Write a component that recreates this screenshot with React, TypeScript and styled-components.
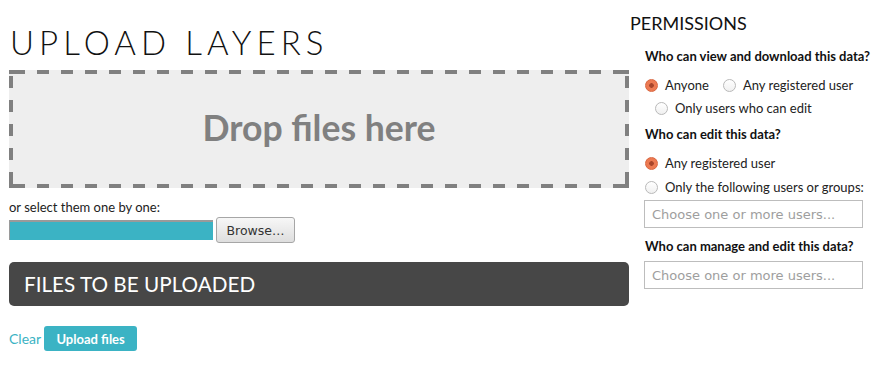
import React from 'react';
import styled, { createGlobalStyle } from 'styled-components';

const GlobalStyle = createGlobalStyle`
  body {
    margin: 0;
    background: #ffffff;
    font-family: Lato, "Open Sans", sans-serif;
    color: #333333;
  }
`;

const StyledPage = styled.div`
  display: grid;
  grid-template-columns: 620px 1fr;
  column-gap: 1px;
  padding-left: 9px;
  width: 880px;
  box-sizing: border-box;
`;

const StyledUpload = styled.section`
  padding-top: 23px;
`;

const Title = styled.h1`
  margin: 0 0 8px 1px;
  font-size: 33px;
  line-height: 39px;
  font-weight: 300;
  letter-spacing: 5.1px;
  color: #111111;
`;

// dashed frame drawn with gradients so the dash length matches (12px on, 12px off)
const dash = '#808080';
const DropZone = styled.div`
  height: 118px;
  box-sizing: border-box;
  background:
    linear-gradient(90deg, ${dash} 12px, transparent 12px) 4px 0 / 24px 4px repeat-x,
    linear-gradient(90deg, ${dash} 12px, transparent 12px) 4px 100% / 24px 4px repeat-x,
    linear-gradient(180deg, ${dash} 12px, transparent 12px) 0 6px / 4px 24px repeat-y,
    linear-gradient(180deg, ${dash} 12px, transparent 12px) 100% 6px / 4px 24px repeat-y,
    linear-gradient(${dash}, ${dash}) 0 0 / 4px 4px no-repeat,
    linear-gradient(${dash}, ${dash}) 100% 0 / 4px 4px no-repeat,
    linear-gradient(${dash}, ${dash}) 0 100% / 16px 4px no-repeat,
    linear-gradient(${dash}, ${dash}) 100% 100% / 16px 4px no-repeat,
    #eeeeee;
  display: flex;
  align-items: center;
  justify-content: center;
  font-size: 35.6px;
  font-weight: 700;
  color: #808080;
  padding-bottom: 3px;
`;

const Hint = styled.p`
  margin: 11px 0 0;
  font-size: 13px;
  line-height: 16px;
  color: #222222;
`;

const FileRow = styled.div`
  display: flex;
  align-items: center;
  gap: 3px;
  margin-top: 2px;
  height: 26px;
`;

const FileField = styled.div`
  width: 204px;
  height: 20px;
  box-sizing: border-box;
  background: #3bb3c4;
  border-top: 2px solid #9a9a9a;
  border-left: 1px solid #9a9a9a;
`;

const BrowseButton = styled.button`
  width: 79px;
  height: 26px;
  box-sizing: border-box;
  border: 1px solid #a6a6a6;
  border-radius: 3px;
  background: linear-gradient(#f7f7f7, #dedede);
  font-family: "DejaVu Sans", sans-serif;
  font-size: 12.5px;
  color: #333333;
  padding: 0;
`;

const FilesBar = styled.div`
  margin-top: 19px;
  height: 44px;
  border-radius: 5px;
  background: #474747;
  color: #ffffff;
  font-size: 20.7px;
  display: flex;
  align-items: center;
  padding: 0 0 1px 15px;
  box-sizing: border-box;
`;

const Actions = styled.div`
  display: flex;
  align-items: center;
  gap: 3px;
  margin-top: 20px;
`;

const ClearLink = styled.a`
  font-size: 14px;
  color: #3bb3c4;
  text-decoration: none;
`;

const UploadButton = styled.button`
  height: 25px;
  width: 93px;
  border: none;
  border-radius: 3px;
  background: #3bb3c4;
  color: #ffffff;
  font-family: Lato, sans-serif;
  font-weight: 700;
  font-size: 13px;
  padding: 0;
`;

const StyledPermissions = styled.aside`
  padding-top: 12px;
`;

const PermTitle = styled.h2`
  margin: 0;
  font-size: 18px;
  line-height: 22px;
  font-weight: 400;
  color: #111111;
`;

const Question = styled.h3<{ $top: number }>`
  margin: ${({ $top }) => $top}px 0 0 15px;
  font-size: 13px;
  line-height: 16px;
  font-weight: 700;
  color: #111111;
`;

const RadioRow = styled.div<{ $top: number; $indent?: number }>`
  display: flex;
  gap: 14px;
  margin: ${({ $top }) => $top}px 0 0 ${({ $indent = 15 }) => $indent}px;
  height: 16px;
`;

const RadioLabel = styled.label`
  display: flex;
  align-items: center;
  gap: 7px;
  font-size: 13px;
  line-height: 16px;
  color: #222222;
`;

const Radio = styled.span<{ $checked?: boolean }>`
  width: 13px;
  height: 13px;
  box-sizing: border-box;
  border-radius: 50%;
  border: 1px solid ${({ $checked }) => ($checked ? '#d9663f' : '#b9b9b9')};
  background: ${({ $checked }) =>
    $checked ? 'radial-gradient(circle, #a8452a 0 2px, #ec7a52 2.6px)' : 'linear-gradient(#ffffff, #f0f0f0)'};
`;

const UserInput = styled.input<{ $top: number }>`
  display: block;
  margin: ${({ $top }) => $top}px 0 0 14px;
  width: 219px;
  height: 28px;
  box-sizing: border-box;
  border: 1px solid #bdbdbd;
  padding: 0 7px;
  font-family: "DejaVu Sans", sans-serif;
  font-size: 13px;
  outline: none;

  &::placeholder {
    color: #9e9e9e;
  }
`;

const Option = ({ label, checked }: { label: string; checked?: boolean }) => (
  <RadioLabel>
    <Radio $checked={checked} />
    {label}
  </RadioLabel>
);

const App = () => {
  return (
    <>
      <GlobalStyle />
      <StyledPage>
        <StyledUpload>
          <Title>UPLOAD LAYERS</Title>
          <DropZone>Drop files here</DropZone>
          <Hint>or select them one by one:</Hint>
          <FileRow>
            <FileField />
            <BrowseButton>Browse…</BrowseButton>
          </FileRow>
          <FilesBar>FILES TO BE UPLOADED</FilesBar>
          <Actions>
            <ClearLink href="#">Clear</ClearLink>
            <UploadButton>Upload files</UploadButton>
          </Actions>
        </StyledUpload>

        <StyledPermissions>
          <PermTitle>PERMISSIONS</PermTitle>
          <Question $top={14}>Who can view and download this data?</Question>
          <RadioRow $top={13}>
            <Option label="Anyone" checked />
            <Option label="Any registered user" />
          </RadioRow>
          <RadioRow $top={7} $indent={25}>
            <Option label="Only users who can edit" />
          </RadioRow>
          <Question $top={10}>Who can edit this data?</Question>
          <RadioRow $top={13}>
            <Option label="Any registered user" checked />
          </RadioRow>
          <RadioRow $top={8}>
            <Option label="Only the following users or groups:" />
          </RadioRow>
          <UserInput $top={5} placeholder="Choose one or more users..." />
          <Question $top={10}>Who can manage and edit this data?</Question>
          <UserInput $top={7} placeholder="Choose one or more users..." />
        </StyledPermissions>
      </StyledPage>
    </>
  );
};

export default App;
